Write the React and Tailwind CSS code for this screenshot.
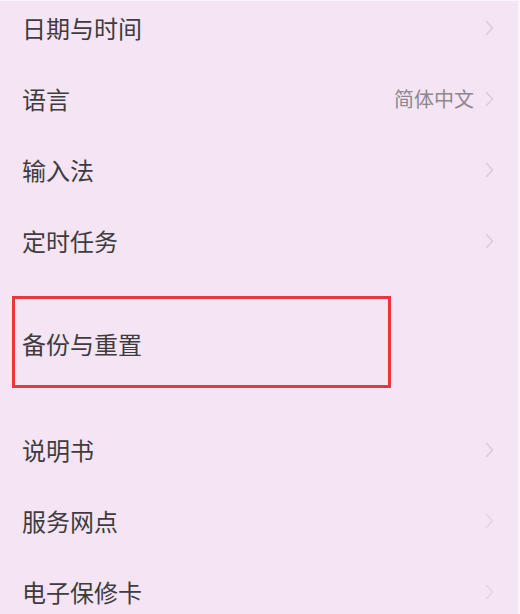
import React from "react";

function Chevron({ tone = "#d9c8d8" }) {
  return (
    <svg width="9" height="16" viewBox="0 0 9 16" fill="none" className="shrink-0">
      <path d="M1.5 1.5 L7.5 8 L1.5 14.5" stroke={tone} strokeWidth="1.6" strokeLinecap="round" strokeLinejoin="round" />
    </svg>
  );
}

function Row({ label, value, chevron = "#dccbdb" }) {
  return (
    <div className="flex h-[71px] items-center justify-between pl-[22px] pr-[24px]">
      <span className="text-[24px] leading-none text-[#3e3c3f]">{label}</span>
      <div className="flex items-center gap-[11px]">
        {value && <span className="text-[20px] leading-none text-[#8e8790]">{value}</span>}
        {chevron && <Chevron tone={chevron} />}
      </div>
    </div>
  );
}

export default function App() {
  return (
    <div
      className="h-[614px] w-[520px] overflow-hidden bg-[#f5e4f3] border-t border-r-2 border-[#fbf3fa]"
      style={{ fontFamily: '"Noto Sans CJK SC", "Noto Sans", sans-serif' }}
    >
      <div className="-mt-[9px] flex flex-col">
        <Row label="日期与时间" />
        <Row label="语言" value="简体中文" />
        <Row label="输入法" />
        <Row label="定时任务" />
        <div className="mt-[20px] mb-[26px] flex items-center justify-between pl-[12px] pr-[25px]">
          <div className="flex h-[92px] w-[379px] items-center border-[3px] border-[#e8383c] pl-[7px] pt-[3px]">
            <span className="text-[24px] leading-none text-[#3e3c3f]">备份与重置</span>
          </div>
        </div>
        <Row label="说明书" />
        <Row label="服务网点" chevron="#e6d5e4" />
        <Row label="电子保修卡" chevron="#e6d5e4" />
      </div>
    </div>
  );
}
